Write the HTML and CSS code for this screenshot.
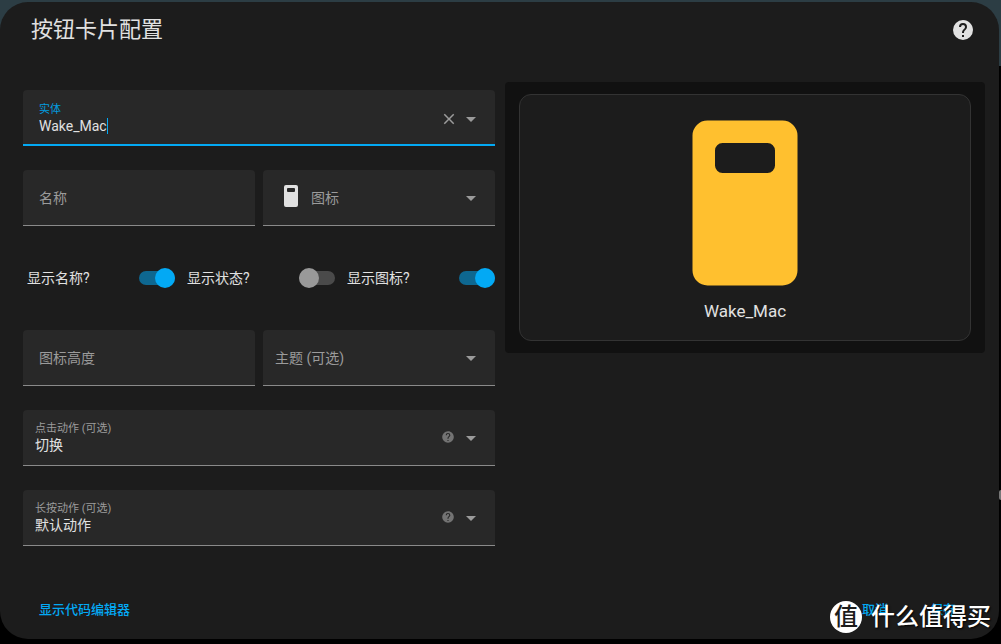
FILE: index.html
```html
<!DOCTYPE html>
<html lang="zh-CN">
<head>
<meta charset="utf-8">
<meta name="viewport" content="width=device-width, initial-scale=1">
<title>按钮卡片配置</title>
<link rel="stylesheet" href="styles.css">
</head>
<body>
<svg class="defs" aria-hidden="true">
  <symbol id="arrow" viewBox="0 0 24 24"><path d="M7 10l5 5 5-5z"/></symbol>
  <symbol id="help" viewBox="0 0 24 24"><path d="M15.07,11.25L14.17,12.17C13.45,12.89 13,13.5 13,15H11V14.5C11,13.39 11.45,12.39 12.17,11.67L13.41,10.41C13.78,10.05 14,9.55 14,9C14,7.89 13.1,7 12,7A2,2 0 0,0 10,9H8A4,4 0 0,1 12,5A4,4 0 0,1 16,9C16,9.88 15.64,10.67 15.07,11.25M13,19H11V17H13M12,2A10,10 0 0,0 2,12A10,10 0 0,0 12,22A10,10 0 0,0 22,12C22,6.47 17.5,2 12,2Z"/></symbol>
  <symbol id="close" viewBox="0 0 24 24"><path d="M19,6.41L17.59,5L12,10.59L6.41,5L5,6.41L10.59,12L5,17.59L6.41,19L12,13.41L17.59,19L19,17.59L13.41,12L19,6.41Z"/></symbol>
  <symbol id="device" viewBox="0 0 24 24"><path d="M7,1H17A2,2 0 0,1 19,3V21A2,2 0 0,1 17,23H7A2,2 0 0,1 5,21V3A2,2 0 0,1 7,1M9,4A1,1 0 0,0 8,5V7A1,1 0 0,0 9,8H15A1,1 0 0,0 16,7V5A1,1 0 0,0 15,4Z"/></symbol>
</svg>
<main class="dialog">
  <header class="header">
    <h1 class="title">按钮卡片配置</h1>
    <button class="icon-button" type="button" aria-label="帮助"><svg class="icon"><use href="#help"/></svg></button>
  </header>

  <div class="content">
    <form class="form" id="config">
      <div class="field focused">
        <div class="stack">
          <label class="caption" for="entity">实体</label>
          <div class="typing"><input class="value" id="entity" type="text" value="Wake_Mac"><span class="caret"></span></div>
        </div>
        <button class="icon-button dim" type="button" aria-label="清除"><svg class="icon medium"><use href="#close"/></svg></button>
        <svg class="icon dim"><use href="#arrow"/></svg>
      </div>

      <div class="pair">
        <div class="field"><input class="value" type="text" placeholder="名称" aria-label="名称"></div>
        <div class="field">
          <svg class="icon preview-icon"><use href="#device"/></svg>
          <input class="value" type="text" placeholder="图标" aria-label="图标">
          <svg class="icon dim"><use href="#arrow"/></svg>
        </div>
      </div>

      <div class="switches">
        <label class="toggle">显示名称?<input class="switch" type="checkbox" role="switch" checked></label>
        <label class="toggle">显示状态?<input class="switch" type="checkbox" role="switch"></label>
        <label class="toggle">显示图标?<input class="switch" type="checkbox" role="switch" checked></label>
      </div>

      <div class="pair">
        <div class="field"><input class="value" type="text" placeholder="图标高度" aria-label="图标高度"></div>
        <div class="field choice">
          <select class="value empty" aria-label="主题"><option>主题 (可选)</option></select>
          <svg class="icon dim"><use href="#arrow"/></svg>
        </div>
      </div>

      <div class="field choice">
        <div class="stack">
          <label class="caption" for="tap">点击动作 (可选)</label>
          <select class="value" id="tap"><option>切换</option></select>
        </div>
        <svg class="icon small"><use href="#help"/></svg>
        <svg class="icon dim"><use href="#arrow"/></svg>
      </div>

      <div class="field choice">
        <div class="stack">
          <label class="caption" for="hold">长按动作 (可选)</label>
          <select class="value" id="hold"><option>默认动作</option></select>
        </div>
        <svg class="icon small"><use href="#help"/></svg>
        <svg class="icon dim"><use href="#arrow"/></svg>
      </div>
    </form>

    <section class="preview">
      <div class="card">
        <svg class="card-icon"><use href="#device"/></svg>
        <span class="card-name">Wake_Mac</span>
      </div>
    </section>
  </div>

  <footer class="footer">
    <button class="text-button" type="button">显示代码编辑器</button>
    <div class="actions">
      <button class="text-button" type="button">取消</button>
      <button class="text-button" type="button">保存</button>
    </div>
  </footer>
</main>
<div class="edge-mark"></div>
<div class="watermark"><span class="badge">值</span><span>什么值得买</span></div>
</body>
</html>
```
FILE: styles.css
```css
* { box-sizing: border-box; }

body {
  margin: 0;
  padding: 2px 2px 5px 0;
  min-height: 100vh;
  display: flex;
  position: relative;
  overflow: hidden;
  background: linear-gradient(#2c3d44 66px, #000 66px);
  color: #e1e1e1;
  font: 14px/20px Roboto, "Noto Sans CJK SC", sans-serif;
}

button, input, select {
  margin: 0;
  padding: 0;
  border: 0;
  background: none;
  color: inherit;
  font: inherit;
}

.defs { position: absolute; width: 0; height: 0; }

.dialog {
  flex: 1;
  min-width: 0;
  display: flex;
  flex-direction: column;
  background: #1c1c1c;
  border-radius: 28px;
}

.header {
  display: flex;
  justify-content: space-between;
  align-items: center;
  padding: 12px 24px 12px 31px;
}

.title {
  margin: 0;
  font-size: 22px;
  line-height: 32px;
  font-weight: 400;
}

.icon { display: block; flex: none; width: 24px; height: 24px; fill: currentColor; }
.medium { width: 18px; height: 18px; }
.small { width: 14px; height: 14px; margin: 0 4px 2px 0; color: #737373; }
.dim { color: #9b9b9b; }
.icon-button { display: block; }

.content {
  flex: 1;
  display: grid;
  grid-template-columns: 1fr 1fr;
  gap: 6px;
  align-items: start;
  padding: 24px 14px 24px 19px;
}

.form { display: grid; gap: 24px; padding: 8px 4px 0; }
.pair { display: grid; grid-template-columns: 1fr 1fr; gap: 8px; }

.field {
  display: flex;
  align-items: center;
  min-width: 0;
  height: 56px;
  padding: 0 12px 0 16px;
  background: #282828;
  border-bottom: 1px solid #8a8a8a;
  border-radius: 4px 4px 0 0;
}

.choice { padding-left: 12px; }
.focused { padding-top: 4px; border-bottom: 2px solid #03a9f4; }
.focused .caption { color: #039bdf; }
.focused .icon-button { margin-right: 1px; }

.stack { flex: 1; min-width: 0; display: flex; flex-direction: column; }
.caption { color: #9b9b9b; font-size: 11px; line-height: 14px; }
.typing { display: flex; align-items: center; }
.caret { width: 1px; height: 16px; background: #03a9f4; }

.value {
  flex: 1;
  min-width: 0;
  line-height: 18px;
  outline: 0;
  appearance: none;
}

.typing .value { flex: none; field-sizing: content; }
.stack > .value { flex: none; width: 100%; }
.value::placeholder { color: #9b9b9b; opacity: 1; }
.empty { color: #9b9b9b; }
.preview-icon { margin: 0 8px 4px 0; }

.switches { display: grid; grid-template-columns: repeat(3, 1fr); gap: 8px; }

.toggle {
  display: flex;
  justify-content: space-between;
  align-items: center;
  height: 56px;
  padding-left: 4px;
}

.switch {
  appearance: none;
  display: grid;
  align-items: center;
  width: 36px;
  height: 20px;
  color: #999;
}

.switch::before, .switch::after { content: ""; grid-area: 1 / 1; }
.switch::before { height: 14px; border-radius: 7px; background: #4a4a4a; }
.switch::after { width: 20px; height: 20px; border-radius: 50%; background: currentColor; }
.switch:checked { color: #03a9f4; }
.switch:checked::before { background: #0e6790; }
.switch:checked::after { justify-self: end; }

.preview { padding: 12px 14px; background: #111; border-radius: 4px; }

.card {
  display: flex;
  flex-direction: column;
  align-items: center;
  padding: 18px 0;
  background: #1c1c1c;
  border: 1px solid #333;
  border-radius: 12px;
}

.card-icon { width: 40%; aspect-ratio: 1; fill: #ffc02f; }
.card-name { margin-top: 7px; font-size: 17px; line-height: 22px; }

.footer {
  display: flex;
  justify-content: space-between;
  padding: 0 43px 19px 39px;
}

.actions { display: flex; gap: 42px; }
.text-button { color: #03a9f4; font-size: 13px; font-weight: 500; line-height: 20px; }

.edge-mark {
  position: absolute;
  right: 0;
  top: 490px;
  width: 2px;
  height: 10px;
  background: #777;
  border-radius: 2px 0 0 2px;
}

.watermark {
  position: absolute;
  right: 10px;
  bottom: 11px;
  display: flex;
  align-items: center;
  gap: 9px;
  color: #fff;
  font-size: 24px;
  font-weight: 500;
  line-height: 32px;
  text-shadow: 1px 1px 2px #000;
}

.badge {
  width: 32px;
  height: 32px;
  border-radius: 50%;
  background: #fff;
  color: #1c1c1c;
  text-align: center;
  text-shadow: none;
}
```
